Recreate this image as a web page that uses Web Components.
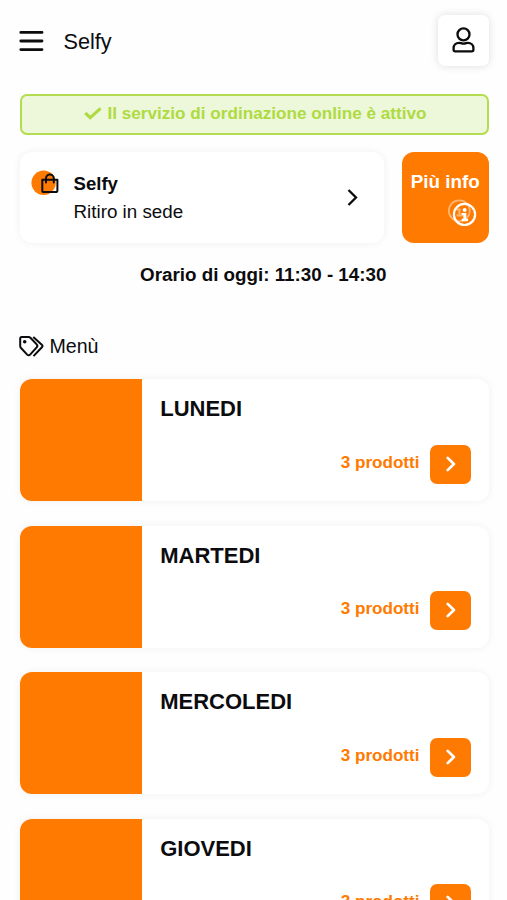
<!DOCTYPE html>
<html lang="it">
<head>
<meta charset="UTF-8">
<meta name="viewport" content="width=device-width, initial-scale=1">
<title>Selfy</title>
<style>
    html {
        overflow: hidden;
    }
    body {
        --primary: #ff7a00;
        --success: #b4dc50;
        --shadow: 0 0 8px rgba(0, 0, 0, 0.06);
        margin: 0;
        height: 900px;
        overflow: hidden;
        background: #fefefe;
        color: #0c0c0f;
        font-family: "Liberation Sans", Arial, sans-serif;
    }
</style>
</head>
<body>
<selfy-app>
    <app-header slot="header">Selfy</app-header>
    <service-banner>Il servizio di ordinazione online è attivo</service-banner>
    <store-info>
        <span slot="name">Selfy</span>
        <span slot="mode">Ritiro in sede</span>
        <span slot="more">Più info</span>
    </store-info>
    <opening-hours>Orario di oggi: 11:30 - 14:30</opening-hours>
    <section-title>Menù</section-title>
    <menu-card products="3">LUNEDI</menu-card>
    <menu-card products="3">MARTEDI</menu-card>
    <menu-card products="3">MERCOLEDI</menu-card>
    <menu-card products="3">GIOVEDI</menu-card>
</selfy-app>

<script>
/** Icone SVG condivise dai componenti. */
const icons = {
    menu: `<svg width="25" height="22" viewBox="0 0 25 22" fill="none" stroke="currentColor" stroke-width="2.8" stroke-linecap="round">
        <path d="M1.8 2.4h21.2M1.8 11h21.2M1.8 19.6h21.2"/></svg>`,
    user: `<svg width="23" height="26" viewBox="0 0 23 26" fill="none" stroke="currentColor" stroke-width="2.3" stroke-linejoin="round">
        <circle cx="11.5" cy="7.4" r="6"/>
        <path d="M7.2 15.8C3.8 15.8 1.6 17.9 1.6 21v1.7c0 .9.7 1.6 1.6 1.6h16.600c.9 0 1.600-.7 1.600-1.600V21c0-3.100-2.200-5.200-5.600-5.200-1.400 0-2.200.9-4.300.9s-2.900-.9-4.300-.9z"/></svg>`,
    check: `<svg width="18" height="13" viewBox="0 0 18 13" fill="none" stroke="currentColor" stroke-width="3.1">
        <path d="M1.3 6l4.9 4.6L16.6 1.3"/></svg>`,
    bag: `<svg width="29" height="26" viewBox="0 0 29 26" fill="none" stroke="#0c0c0f" stroke-width="2" stroke-linejoin="round">
        <circle cx="12.6" cy="12.8" r="12.200" fill="var(--primary)" stroke="none"/>
        <path d="M11.3 9.8h15.100v10.600a1.700 1.700 0 0 1-1.700 1.700H13a1.700 1.700 0 0 1-1.700-1.700z"/>
        <path d="M15 12.400V8.400a3.900 3.900 0 0 1 7.800 0v4" stroke-linecap="round"/></svg>`,
    arrow: `<svg width="11" height="17" viewBox="0 0 11 17" fill="none" stroke="currentColor" stroke-width="2.3">
        <path d="M1.5 1L9 8.500 1.500 16"/></svg>`,
    info: `<svg width="30" height="29" viewBox="0 0 30 29" fill="none" stroke="#fff">
        <g opacity=".45"><circle cx="12.3" cy="11.8" r="10.5" stroke-width="1.7"/>
        <path d="M9.5 10.5h3v6m-3 0h6M12 7.200v.1" stroke-width="2"/></g>
        <circle cx="17.5" cy="15.4" r="10.6" stroke-width="2.2"/>
        <circle cx="17.6" cy="10.9" r="2" fill="#fff" stroke="none"/>
        <path d="M14.600 13.900h4.700v5.900h1.700v2.400h-6.400v-2.400h1.700v-3.500h-1.700z" fill="#fff" stroke="none"/></svg>`,
    tags: `<svg width="25" height="21" viewBox="0 0 25 21" fill="none" stroke="currentColor" stroke-width="2" stroke-linejoin="round">
        <path d="M1.200 2.500A1.500 1.500 0 0 1 2.700 1h6.900c.7 0 1.300.2 1.800.7l6.300 6.700c.8.900.8 2.100 0 3l-6.600 7.200c-.8.900-2 .9-2.900 0L2 12c-.5-.5-.8-1.100-.8-1.900z"/>
        <path d="M14.300 1l8.500 7.700c.9.800.9 1.700.1 2.600l-8.400 8.800"/>
        <circle cx="5.7" cy="5.8" r="1.8" fill="currentColor" stroke="none"/></svg>`,
    chevron: `<svg width="10" height="16" viewBox="0 0 10 16" fill="none" stroke="#fff" stroke-width="2.7" stroke-linecap="round" stroke-linejoin="round">
        <path d="M1.700 1.900L7.900 8l-6.200 6.100"/></svg>`
};

/** Contenitore della pagina: intestazione e colonna dei contenuti. */
class SelfyApp extends HTMLElement {
    constructor() {
        super();
        this.attachShadow({ mode: 'open' }).innerHTML = `
            <style>
                :host { display: block; padding: 15px 18px 0 19.5px; }
                main { display: flex; flex-direction: column; }
            </style>
            <slot name="header"></slot>
            <main><slot></slot></main>
        `;
    }
}

/** Barra superiore con menu, nome del locale e profilo. */
class AppHeader extends HTMLElement {
    constructor() {
        super();
        this.attachShadow({ mode: 'open' }).innerHTML = `
            <style>
                :host { display: flex; align-items: center; height: 51px; font-size: 21.7px; }
                svg { display: block; }
                :host > svg { margin-left: -1px; }
                h1 { flex: 1; margin: 2px 0 0 20px; font: inherit; }
                button {
                    display: flex;
                    align-items: center;
                    justify-content: center;
                    box-sizing: border-box;
                    width: 51px;
                    height: 51px;
                    padding: 0 0 2px;
                    border: 0;
                    border-radius: 7px;
                    background: #fff;
                    color: inherit;
                    box-shadow: 0 0 8px rgba(0, 0, 0, 0.13);
                }
            </style>
            ${icons.menu}
            <h1><slot></slot></h1>
            <button aria-label="Profilo">${icons.user}</button>
        `;
    }
}

/** Avviso sullo stato del servizio. */
class ServiceBanner extends HTMLElement {
    constructor() {
        super();
        this.attachShadow({ mode: 'open' }).innerHTML = `
            <style>
                :host {
                    display: flex;
                    align-items: center;
                    justify-content: center;
                    gap: 5.5px;
                    box-sizing: border-box;
                    height: 41px;
                    margin-top: 28px;
                    padding: 0 0 2px 2px;
                    border: 2px solid var(--success);
                    border-radius: 7px;
                    background: #edf7da;
                    color: #addb40;
                    font-size: 17.15px;
                    font-weight: bold;
                }
            </style>
            ${icons.check}<span><slot></slot></span>
        `;
    }
}

/** Scheda del punto di ritiro con il pulsante delle informazioni. */
class StoreInfo extends HTMLElement {
    constructor() {
        super();
        this.attachShadow({ mode: 'open' }).innerHTML = `
            <style>
                :host { display: flex; gap: 18px; height: 91px; margin-top: 17.4px; font-size: 18.8px; }
                .store, .more { box-sizing: border-box; border-radius: 12px; }
                .store {
                    display: flex;
                    flex: 1;
                    padding: 18px 26px 0 11px;
                    background: #fff;
                    box-shadow: var(--shadow);
                }
                .text { flex: 1; margin-left: 14px; line-height: 27.5px; }
                .name { font-weight: bold; font-size: 18.6px; }
                .arrow { margin-top: 19px; }
                .more {
                    display: flex;
                    flex-direction: column;
                    align-items: center;
                    width: 87.5px;
                    padding-top: 19px;
                    background: var(--primary);
                    color: #fff;
                    font-weight: bold;
                }
                .more svg { align-self: flex-end; margin: 6px 12px 0 0; }
                svg { display: block; }
            </style>
            <div class="store">
                ${icons.bag}
                <div class="text">
                    <div class="name"><slot name="name"></slot></div>
                    <div><slot name="mode"></slot></div>
                </div>
                <div class="arrow">${icons.arrow}</div>
            </div>
            <div class="more"><slot name="more"></slot>${icons.info}</div>
        `;
    }
}

class OpeningHours extends HTMLElement {
    constructor() {
        super();
        this.attachShadow({ mode: 'open' }).innerHTML = `
            <style>
                :host {
                    display: block;
                    margin: 20px 0 0 18px;
                    line-height: 24px;
                    text-align: center;
                    font-size: 18.8px;
                    font-weight: bold;
                }
            </style>
            <slot></slot>
        `;
    }
}

class SectionTitle extends HTMLElement {
    constructor() {
        super();
        this.attachShadow({ mode: 'open' }).innerHTML = `
            <style>
                :host {
                    display: flex;
                    align-items: center;
                    gap: 6px;
                    height: 24px;
                    margin: 47.1px 0 20.5px -1px;
                    font-size: 19.6px;
                }
            </style>
            ${icons.tags}<span><slot></slot></span>
        `;
    }
}

/**
 * Voce del menù.
 * @example
 * <menu-card products="3">LUNEDI</menu-card>
 */
class MenuCard extends HTMLElement {
    constructor() {
        super();
        this.attachShadow({ mode: 'open' });
    }

    connectedCallback() {
        const products = this.getAttribute('products') || '0';

        this.shadowRoot.innerHTML = `
            <style>
                :host {
                    display: flex;
                    height: 122.2px;
                    margin-bottom: 24.4px;
                    overflow: hidden;
                    border-radius: 12px;
                    background: #fff;
                    box-shadow: var(--shadow);
                }
                .picture { width: 122.2px; background: var(--primary); }
                .body {
                    display: flex;
                    flex: 1;
                    flex-direction: column;
                    justify-content: space-between;
                    padding: 17px 18px 17.5px 18.5px;
                }
                h2 { margin: 0; font-size: 22px; line-height: 26px; }
                .footer {
                    display: flex;
                    align-items: center;
                    justify-content: flex-end;
                    gap: 10.5px;
                    color: var(--primary);
                    font-size: 17.1px;
                    font-weight: bold;
                }
                .footer span { margin-top: -3px; }
                button {
                    display: flex;
                    align-items: center;
                    justify-content: center;
                    box-sizing: border-box;
                    width: 41px;
                    height: 39px;
                    padding: 0 0 1px;
                    border: 0;
                    border-radius: 7px;
                    background: var(--primary);
                }
            </style>
            <div class="picture"></div>
            <div class="body">
                <h2><slot></slot></h2>
                <div class="footer">
                    <span>${products} prodotti</span>
                    <button aria-label="Apri">${icons.chevron}</button>
                </div>
            </div>
        `;
    }
}

// Registro dei Custom Elements
customElements.define('selfy-app', SelfyApp);
customElements.define('app-header', AppHeader);
customElements.define('service-banner', ServiceBanner);
customElements.define('store-info', StoreInfo);
customElements.define('opening-hours', OpeningHours);
customElements.define('section-title', SectionTitle);
customElements.define('menu-card', MenuCard);
</script>
</body>
</html>
